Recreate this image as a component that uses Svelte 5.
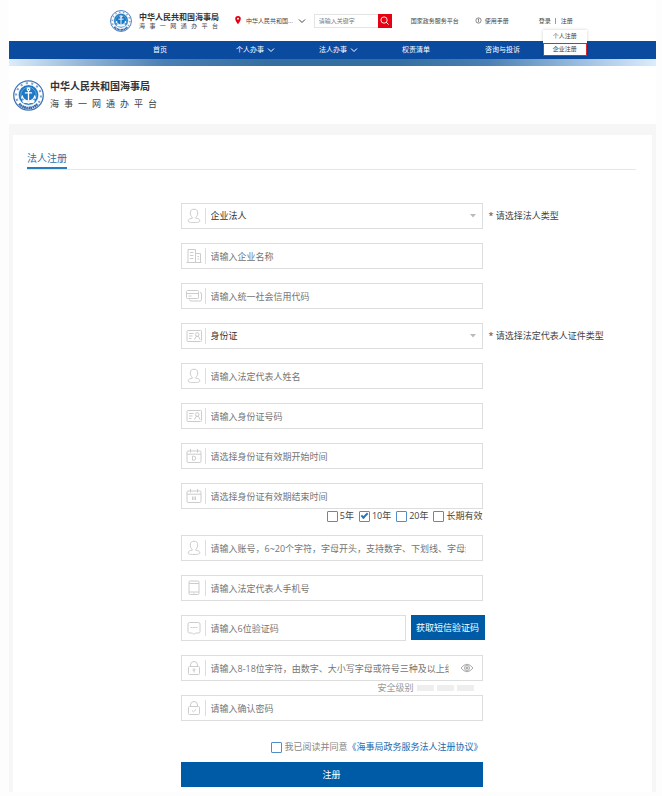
<script lang="ts">
	type IconName = 'user' | 'building' | 'cards' | 'id' | 'start' | 'end' | 'phone' | 'message' | 'lock' | 'lockCheck';

	type Field = {
		id: string;
		icon: IconName;
		placeholder: string;
		options?: string[];
		hint?: string;
	};

	const navItems = [
		{ label: '首页', menu: false },
		{ label: '个人办事', menu: true },
		{ label: '法人办事', menu: true },
		{ label: '权责清单', menu: false },
		{ label: '咨询与投诉', menu: false }
	];

	const identityFields: Field[] = [
		{ id: 'legal-type', icon: 'user', placeholder: '', options: ['企业法人'], hint: '* 请选择法人类型' },
		{ id: 'company', icon: 'building', placeholder: '请输入企业名称' },
		{ id: 'credit-code', icon: 'cards', placeholder: '请输入统一社会信用代码' },
		{ id: 'cert-type', icon: 'id', placeholder: '', options: ['身份证'], hint: '* 请选择法定代表人证件类型' },
		{ id: 'name', icon: 'user', placeholder: '请输入法定代表人姓名' },
		{ id: 'id-number', icon: 'id', placeholder: '请输入身份证号码' },
		{ id: 'valid-from', icon: 'start', placeholder: '请选择身份证有效期开始时间' },
		{ id: 'valid-to', icon: 'end', placeholder: '请选择身份证有效期结束时间' }
	];

	const accountFields: Field[] = [
		{ id: 'account', icon: 'user', placeholder: '请输入账号，6~20个字符，字母开头，支持数字、下划线、字母组合' },
		{ id: 'mobile', icon: 'phone', placeholder: '请输入法定代表人手机号' }
	];

	const periods = ['5年', '10年', '20年', '长期有效'];

	let period = $state('10年');
	let agreed = $state(false);
	let showPassword = $state(false);
</script>

{#snippet emblem()}
	<svg class="emblem" viewBox="0 0 60 60" aria-hidden="true">
		<circle cx="30" cy="30" r="28.5" fill="#fff" stroke="#3f73b4" stroke-width="2.5" />
		<circle cx="30" cy="30" r="24" fill="none" stroke="#7fa3d0" stroke-width="4" stroke-dasharray="4 6.700" />
		<path d="M12 46a24 24 0 0 0 36 0" fill="none" stroke="#2c64aa" stroke-width="5" stroke-dasharray="3 1" />
		<circle cx="30" cy="29" r="20" fill="#1c78c4" stroke="#fff" stroke-width="1.5" />
		<circle cx="30" cy="29" r="15" fill="none" stroke="#74b3e2" stroke-width="1.5" />
		<g fill="none" stroke="#fff" stroke-width="2.5" stroke-linecap="round">
			<circle cx="30" cy="18" r="2.5" />
			<path d="M30 21v19M24 25h12M18 31c1 6 5 9 12 10 7-1 11-4 12-10M18 31l-1 4M42 31l1 4" />
		</g>
		<path d="M17 40q6-3 13 2 7-5 13-2l-4 5q-5-1-9 1-4-2-9-1z" fill="#fff" />
	</svg>
{/snippet}

{#snippet chevron()}
	<svg class="chevron" viewBox="0 0 8 8" aria-hidden="true"><path d="M1 2.5l3 3 3-3" /></svg>
{/snippet}

{#snippet icon(name: IconName)}
	<svg class="icon" viewBox="0 0 16 16" aria-hidden="true">
		{#if name === 'user'}
			<path d="M6.200 9.200C4.800 8.200 4.300 6.600 4.300 5c0-2.600 1.400-3.800 3.700-3.800s3.700 1.200 3.700 3.800c0 1.600-.5 3.200-1.900 4.200v1c2.800.4 4 1.200 4 2.500 0 1.500-1.800 1.800-5.800 1.800s-5.800-.3-5.800-1.800c0-1.300 1.200-2.100 4-2.500z" />
		{:else if name === 'building'}
			<path d="M2 14V1.500h7.500V14M9.500 5.500h5V14M.5 14.500h15M4 4.500h3.500M4 7.500h3.500M4 10.500h3.500M11.500 8.500h1.500M11.500 11h1.500" />
		{:else if name === 'cards'}
			<path d="M1.500 2.500h10q1 0 1 1v6q0 1-1 1h-10q-1 0-1-1v-6q0-1 1-1zM.5 5.500h12M2.500 8h3M14 4.500q1.500 0 1.500 1.500v5.500q0 1.500-1.500 1.500H5q-1.500 0-1.500-1.500" />
		{:else if name === 'id'}
			<rect x="1" y="2.500" width="14.500" height="11" rx="1" />
			<path d="M3 5.500h4.500M3 8h3.500M3 10.500h2.500M8.500 11.500l1.500-3h2.500l1.500 3" />
			<circle cx="11.200" cy="6.500" r="1.800" />
		{:else if name === 'start' || name === 'end'}
			<rect x="1" y="3" width="14" height="11.500" rx="1.200" />
			<path d="M1 6.200h14M4.500 1v3.500M11.500 1v3.500" />
			{#if name === 'start'}
				<path d="M6.500 8.200v4h1.300a2 2 0 0 0 0-4z" />
			{:else}
				<path d="M6.500 8.500v3.500M8 8.500v3.500M9.500 8.500v3.500" />
			{/if}
		{:else if name === 'phone'}
			<rect x="3" y="1" width="10" height="13.500" rx="1.200" />
			<path d="M3 3.500h10M3 12h10M7.500 13.300h1" />
		{:else if name === 'message'}
			<path d="M3.500 2.500h9q1.500 0 1.500 1.500v7.500q0 1.500-1.500 1.500H9.500L8 14.500 6.500 13h-3Q2 13 2 11.500V4q0-1.500 1.500-1.500zM4.500 7.500h2M7 7.500h2M9.500 7.500h2" />
		{:else}
			<rect x="2.500" y="6.500" width="11" height="8" rx="1" />
			<path d="M4.500 6.500V5a3.500 3.500 0 0 1 7 0v1.500" />
			{#if name === 'lock'}
				<circle cx="8" cy="9.800" r="1" />
				<path d="M8 10.800v1.700" />
			{:else}
				<path d="M6 10.500l1.500 1.300L10.200 9.300" />
			{/if}
		{/if}
	</svg>
{/snippet}

{#snippet fieldRow(field: Field)}
	<div class="row">
		<div class="field">
			{@render icon(field.icon)}
			{#if field.options}
				<select id={field.id}>
					{#each field.options as option}
						<option>{option}</option>
					{/each}
				</select>
				<svg class="caret" viewBox="0 0 6 4" aria-hidden="true"><path d="M0 0h6L3 3.500z" /></svg>
			{:else}
				<input id={field.id} type="text" placeholder={field.placeholder} aria-label={field.placeholder} />
			{/if}
		</div>
		{#if field.hint}
			<label class="hint" for={field.id}>{field.hint}</label>
		{/if}
	</div>
{/snippet}

<div class="page">
	<header class="topbar">
		<div class="brand">
			{@render emblem()}
			<div class="names">
				<strong>中华人民共和国海事局</strong>
				<span>海事一网通办平台</span>
			</div>
		</div>
		<button class="region" type="button">
			<svg class="pin" viewBox="0 0 8 12" aria-hidden="true">
				<path d="M4 0a3.700 3.700 0 0 0-3.700 3.700C.3 6.500 4 11 4 11s3.700-4.500 3.700-7.300A3.700 3.700 0 0 0 4 0z" fill="#e60012" />
				<circle cx="4" cy="3.700" r="1.300" fill="#fff" />
			</svg>
			<span>中华人民共和国...</span>
			{@render chevron()}
		</button>
		<form class="search">
			<input type="search" placeholder="请输入关键字" aria-label="请输入关键字" />
			<button type="button" aria-label="搜索">
				<svg viewBox="0 0 10 10"><circle cx="4.500" cy="4.500" r="3.500" /><path d="M7 7l2.500 2.500" /></svg>
			</button>
		</form>
		<a class="platform" href="#platform">国家政务服务平台</a>
		<a class="manual" href="#manual">
			<svg viewBox="0 0 8 8" aria-hidden="true"><circle cx="4" cy="4" r="3" /><path d="M3.300 2.800L4 2.300V5.800" /></svg>
			使用手册
		</a>
		<div class="auth">
			<a href="#login">登录</a><i></i><a href="#register">注册</a>
			<div class="menu">
				<a href="#personal">个人注册</a>
				<a class="current" href="#company">企业注册</a>
			</div>
		</div>
	</header>

	<nav>
		{#each navItems as item}
			<a href="#nav">
				{item.label}
				{#if item.menu}{@render chevron()}{/if}
			</a>
		{/each}
	</nav>
	<div class="banner"></div>

	<div class="brand large">
		{@render emblem()}
		<div class="names">
			<strong>中华人民共和国海事局</strong>
			<span>海事一网通办平台</span>
		</div>
	</div>

	<main>
		<section class="card">
			<div class="heading"><h1>法人注册</h1></div>

			<form class="register">
				{#each identityFields as field}
					{@render fieldRow(field)}
				{/each}

				<div class="row periods-row">
					<div class="periods">
						{#each periods as item}
							<label>
								<input
									type="checkbox"
									checked={period === item}
									onchange={() => (period = item)}
								/>
								{item}
							</label>
						{/each}
					</div>
				</div>

				{#each accountFields as field}
					{@render fieldRow(field)}
				{/each}

				<div class="row">
					<div class="code">
						<div class="field">
							{@render icon('message')}
							<input type="text" placeholder="请输入6位验证码" aria-label="请输入6位验证码" />
						</div>
						<button class="primary" type="button">获取短信验证码</button>
					</div>
				</div>

				<div class="row password-row">
					<div class="field">
						{@render icon('lock')}
						<input
							type={showPassword ? 'text' : 'password'}
							placeholder="请输入8-18位字符，由数字、大小写字母或符号三种及以上组成"
							aria-label="密码"
						/>
						<button
							class="eye"
							type="button"
							aria-label="显示密码"
							onclick={() => (showPassword = !showPassword)}
						>
							<svg viewBox="0 0 14 10">
								<path d="M1 5q6-7.500 12 0-6 7.500-12 0z" />
								<circle cx="7" cy="5" r="2.500" />
								<circle class="pupil" cx="7" cy="5" r="1" />
							</svg>
						</button>
					</div>
				</div>

				<div class="row strength-row">
					<div class="strength">安全级别 <i></i><i></i><i></i></div>
				</div>

				<div class="row">
					<div class="field">
						{@render icon('lockCheck')}
						<input type="password" placeholder="请输入确认密码" aria-label="请输入确认密码" />
					</div>
				</div>

				<div class="row agree-row">
					<div class="agree">
						<label><input type="checkbox" bind:checked={agreed} />我已阅读并同意</label>
						<a href="#agreement">《海事局政务服务法人注册协议》</a>
					</div>
				</div>

				<div class="row submit-row">
					<button class="primary" type="button">注册</button>
				</div>
			</form>
		</section>
	</main>
</div>

<style>
	:global(body) {
		margin: 0;
		background: #fdfdfd;
	}

	.page {
		margin: 0 6px 0 9px;
		background: #fff;
		color: #444;
		font-family: 'Open Sans', 'Noto Sans CJK SC', sans-serif;
		font-size: 9px;
		line-height: 14px;
	}

	.page *,
	.page *::before {
		box-sizing: border-box;
	}

	a {
		color: inherit;
		text-decoration: none;
	}

	button,
	input,
	select {
		margin: 0;
		padding: 0;
		border: 0;
		border-radius: 0;
		background: none;
		color: inherit;
		font: inherit;
	}

	svg {
		display: block;
		flex: none;
		fill: none;
		stroke: currentColor;
	}

	.emblem,
	.pin {
		stroke: none;
	}

	/* top bar */
	.topbar {
		display: flex;
		align-items: center;
		height: 41px;
		padding-left: 101px;
		font-size: 6px;
		line-height: 10px;
		white-space: nowrap;
	}

	.brand {
		display: flex;
		align-items: center;
		gap: 7px;
	}

	.brand .emblem {
		width: 22px;
		height: 22px;
	}

	.names {
		display: flex;
		flex-direction: column;
		width: 79px;
	}

	.names strong {
		color: #333;
		font-size: 8px;
		line-height: 11px;
	}

	.names span {
		line-height: 9px;
		text-align-last: justify;
	}

	.region {
		display: flex;
		align-items: center;
		gap: 5px;
		margin-left: 17px;
	}

	.pin {
		width: 6px;
		height: 9px;
	}

	.chevron {
		width: 8px;
		height: 8px;
	}

	.search {
		display: flex;
		height: 14px;
		margin-left: 8px;
	}

	.search input {
		width: 64px;
		padding-left: 4px;
		border: 1px solid #e4e4e4;
		border-right: 0;
		appearance: none;
	}

	.search button {
		display: grid;
		place-items: center;
		width: 14px;
		background: #e60012;
		color: #fff;
	}

	.search svg {
		width: 9px;
		height: 9px;
	}

	.platform {
		margin-left: 19px;
	}

	.manual {
		display: flex;
		align-items: center;
		gap: 3px;
		margin-left: 16px;
	}

	.manual svg {
		width: 7px;
		height: 7px;
		stroke-width: 0.7;
	}

	.auth {
		position: relative;
		display: flex;
		align-items: center;
		margin-left: 30px;
	}

	.auth i {
		width: 1px;
		height: 6px;
		margin: 0 5px 0 4px;
		background: #999;
	}

	.menu {
		position: absolute;
		top: 14px;
		left: 4px;
		z-index: 1;
		width: 44px;
		background: #fff;
		box-shadow: 0 0 3px rgb(0 0 0 / 20%);
		text-align: center;
	}

	.menu a {
		display: block;
		line-height: 13px;
	}

	.menu .current {
		border: 1px solid #d9252b;
		line-height: 11px;
	}

	nav {
		display: flex;
		height: 18px;
		padding-left: 144px;
		background: #0a4a9f;
		color: #fff;
		font-size: 7px;
		line-height: 18px;
		white-space: nowrap;
	}

	nav a {
		display: flex;
		align-items: center;
		gap: 3px;
		width: 83px;
	}

	.banner {
		height: 7px;
		background: linear-gradient(90deg, #dcecfb, #8fb3d5 12%, #4a80b3 24%, #356fa1 40%, #356fa1 60%, #4a80b3 74%, #9abddf 88%, #dcecfb);
	}

	.brand.large {
		gap: 6px;
		height: 58px;
		padding-left: 4px;
	}

	.large .emblem {
		width: 31px;
		height: 31px;
	}

	.large .names {
		width: 107px;
		gap: 2px;
	}

	.large strong {
		font-size: 10px;
		line-height: 15px;
	}

	.large span {
		font-size: 9px;
		line-height: 15px;
	}

	main {
		padding: 11px 4px 0;
		background: #f6f6f6;
	}

	.card {
		padding: 14px 16px 5px 14px;
		background: #fff;
	}

	.heading {
		display: flex;
		border-bottom: 1px solid #e6e6e6;
	}

	h1 {
		margin: 0;
		border-bottom: 2px solid #2a7abf;
		color: #2a72ab;
		font-size: 10px;
		font-weight: 400;
		line-height: 18px;
	}

	.register {
		padding-top: 33px;
	}

	.row {
		display: grid;
		grid-template-columns: 1fr 302px 1fr;
		align-items: center;
		margin-bottom: 14px;
	}

	.row > :first-child {
		grid-column: 2;
	}

	.field {
		display: flex;
		align-items: center;
		height: 26px;
		padding: 0 16px 0 4px;
		border: 1px solid #ddd;
	}

	.icon {
		width: 16px;
		height: 16px;
		color: #ccc;
	}

	.field input,
	.field select {
		flex: 1;
		min-width: 0;
		height: 16px;
		margin-left: 3px;
		padding-left: 5px;
		border-left: 1px solid #ddd;
		outline: none;
		appearance: none;
	}

	.field select {
		color: #333;
	}

	input::placeholder {
		color: #757575;
		opacity: 1;
	}

	.caret {
		width: 6px;
		height: 4px;
		margin-right: -10px;
		fill: #bbb;
		stroke: none;
	}

	.hint {
		padding-left: 6px;
		white-space: nowrap;
	}

	.periods-row {
		margin: -14px 0 12px;
	}

	.periods {
		display: flex;
		justify-content: flex-end;
		gap: 5px;
	}

	label {
		display: flex;
		align-items: center;
		gap: 2px;
	}

	input[type='checkbox'] {
		display: grid;
		place-items: center;
		width: 11px;
		height: 11px;
		border: 1px solid #4f8fc6;
		border-radius: 1px;
		background: #fff;
		appearance: none;
	}

	input[type='checkbox']:checked::before {
		content: '';
		width: 7px;
		height: 4px;
		border: solid #2a76bb;
		border-width: 0 0 2px 2px;
		transform: translateY(-1px) rotate(-45deg);
	}

	.code {
		display: flex;
		gap: 5px;
		margin-right: -2px;
	}

	.code .field {
		flex: 1;
		min-width: 0;
	}

	.primary {
		height: 25px;
		background: #005ba6;
		color: #fff;
	}

	.code .primary {
		width: 74px;
	}

	.password-row {
		margin-bottom: 0;
	}

	.password-row .field {
		padding-right: 8px;
	}

	.eye {
		width: 14px;
		margin-left: 11px;
		color: #aaa;
	}

	.eye svg {
		width: 14px;
		height: 10px;
	}

	.pupil {
		fill: currentColor;
	}

	.strength {
		display: flex;
		align-items: center;
		justify-content: flex-end;
		gap: 3px;
		padding-right: 9px;
		color: #999;
	}

	.strength i {
		width: 17px;
		height: 6px;
		background: #eee;
	}

	.strength-row {
		margin-bottom: 0;
	}

	.agree-row {
		margin: 19px 0 8px;
	}

	.agree {
		display: flex;
		justify-content: flex-end;
		color: #888;
		white-space: nowrap;
	}

	.agree a {
		color: #1a68aa;
	}

	.submit-row {
		margin-bottom: 0;
	}
</style>
